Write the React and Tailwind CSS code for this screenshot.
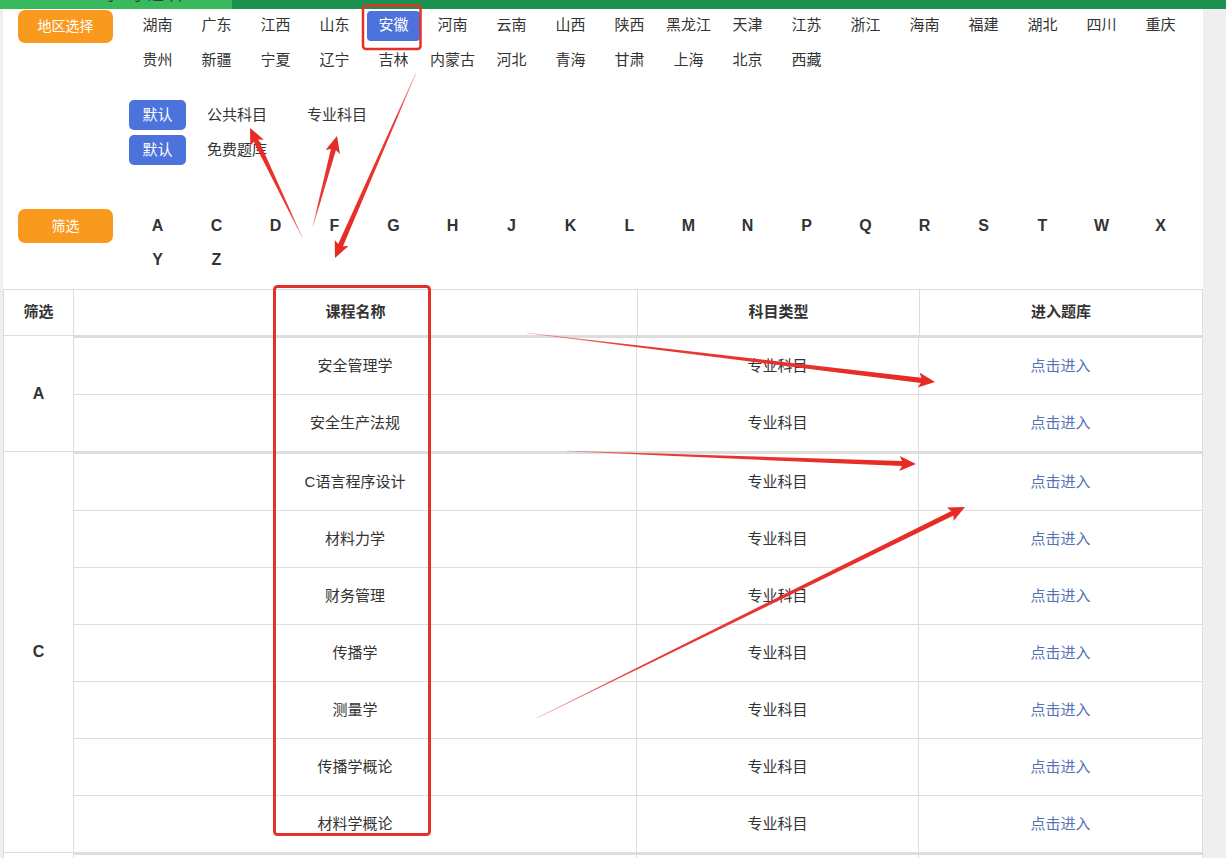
import React from "react";

const row1 = ["湖南","广东","江西","山东","安徽","河南","云南","山西","陕西","黑龙江","天津","江苏","浙江","海南","福建","湖北","四川","重庆"];
const row2 = ["贵州","新疆","宁夏","辽宁","吉林","内蒙古","河北","青海","甘肃","上海","北京","西藏"];
const letters = ["A","C","D","F","G","H","J","K","L","M","N","P","Q","R","S","T","W","X","Y","Z"];

const groups = [
  { letter: "A", items: ["安全管理学", "安全生产法规"] },
  { letter: "C", items: ["C语言程序设计", "材料力学", "财务管理", "传播学", "测量学", "传播学概论", "材料学概论"] },
];

function arrowPoints(tx, ty, hx, hy, headLen = 14, headW = 7.5, shaftW = 2.6, tailW = 0.3) {
  const dx = hx - tx, dy = hy - ty;
  const len = Math.hypot(dx, dy);
  const ux = dx / len, uy = dy / len;
  const nx = -uy, ny = ux;
  const bx = hx - ux * headLen, by = hy - uy * headLen;
  const bbx = bx - ux * 2.5, bby = by - uy * 2.5;
  const p = [
    [tx + nx * tailW, ty + ny * tailW],
    [bx + nx * shaftW, by + ny * shaftW],
    [bbx + nx * headW, bby + ny * headW],
    [hx, hy],
    [bbx - nx * headW, bby - ny * headW],
    [bx - nx * shaftW, by - ny * shaftW],
    [tx - nx * tailW, ty - ny * tailW],
  ];
  return p.map((q) => q[0].toFixed(1) + "," + q[1].toFixed(1)).join(" ");
}

const arrows = [
  [302, 237, 250, 128],
  [313, 226, 337, 136],
  [416, 73, 335, 258],
  [527, 333, 935, 382],
  [567, 451, 916, 464],
  [537, 718, 965, 507],
];

function Annotations() {
  return (
    <svg className="absolute left-0 top-0 pointer-events-none" width="1226" height="858" viewBox="0 0 1226 858">
      <defs>
        {arrows.map((a, i) => (
          <linearGradient key={i} id={"ag" + i} gradientUnits="userSpaceOnUse" x1={a[0]} y1={a[1]} x2={a[2]} y2={a[3]}>
            <stop offset="0" stopColor="#e8302a" stopOpacity="0.45" />
            <stop offset="0.25" stopColor="#e8302a" stopOpacity="0.95" />
            <stop offset="1" stopColor="#e62a24" stopOpacity="1" />
          </linearGradient>
        ))}
      </defs>
      <rect x="363" y="5.5" width="57.5" height="43.5" rx="3" fill="none" stroke="#e2302a" strokeWidth="2.5" />
      <rect x="274.5" y="286.5" width="155" height="548" rx="3" fill="none" stroke="#e2302a" strokeWidth="3" />
      {arrows.map((a, i) => (
        <polygon key={i} points={arrowPoints(a[0], a[1], a[2], a[3])} fill={"url(#ag" + i + ")"} />
      ))}
    </svg>
  );
}

export default function App() {
  return (
    <div className="relative w-[1226px] h-[858px] overflow-hidden bg-[#efefef] flex flex-col font-['Liberation_Sans','Noto_Sans_CJK_SC',sans-serif] text-[#333]">
      {/* green top bar */}
      <div className="flex h-[9px] shrink-0">
        <div className="w-[232px] bg-[#38b95e] overflow-hidden pl-[104px]">
          <div className="-mt-[13px] text-[16px] leading-[16px] text-[#2f3b33] tracking-[6px]">学习题库</div>
        </div>
        <div className="flex-1 bg-[#1b914f]" />
      </div>

      {/* white panel */}
      <div className="ml-[3px] w-[1200px] flex-1 bg-white flex flex-col">
        {/* region selection */}
        <div className="flex">
          <div className="ml-[15px] mt-[1px] w-[95px] h-[33px] rounded-[7px] bg-[#f99a1e] text-white text-[14px] flex items-center justify-center shrink-0">
            地区选择
          </div>
          <div className="ml-[15px] -mt-[1px] grid grid-cols-[repeat(18,59px)] auto-rows-[35px] text-[15px]">
            {row1.map((p) => (
              <div key={p} className="flex items-center justify-center">
                {p === "安徽" ? (
                  <span className="w-[53px] h-[30px] rounded-[4px] bg-[#4c72dc] text-white flex items-center justify-center">{p}</span>
                ) : (
                  <span>{p}</span>
                )}
              </div>
            ))}
            {row2.map((p) => (
              <div key={p} className="flex items-center justify-center">
                <span>{p}</span>
              </div>
            ))}
          </div>
        </div>

        {/* default / subject type */}
        <div className="ml-[126px] mt-[22px] flex flex-col gap-[5px] text-[15px]">
          <div className="flex items-center h-[30px]">
            <span className="w-[57px] h-[30px] rounded-[5px] bg-[#4c72dc] text-white flex items-center justify-center">默认</span>
            <span className="ml-[21px]">公共科目</span>
            <span className="ml-[40px]">专业科目</span>
          </div>
          <div className="flex items-center h-[30px]">
            <span className="w-[57px] h-[30px] rounded-[5px] bg-[#4c72dc] text-white flex items-center justify-center">默认</span>
            <span className="ml-[21px]">免费题库</span>
          </div>
        </div>

        {/* letter filter */}
        <div className="flex mt-[44px]">
          <div className="ml-[15px] w-[95px] h-[34px] rounded-[7px] bg-[#f99a1e] text-white text-[14px] flex items-center justify-center shrink-0">
            筛选
          </div>
          <div className="ml-[15px] grid grid-cols-[repeat(18,59px)] auto-rows-[34px] text-[16px] font-bold">
            {letters.map((l) => (
              <div key={l} className="flex items-center justify-center">{l}</div>
            ))}
          </div>
        </div>

        {/* table */}
        <div className="mt-[12px] border-l border-r border-t border-[#dddddd] text-[15px]">
          <div className="flex h-[45px] font-bold">
            <div className="w-[70px] border-r border-[#dddddd] flex items-center justify-center">筛选</div>
            <div className="w-[564px] border-r border-[#dddddd] flex items-center justify-center">课程名称</div>
            <div className="w-[282px] border-r border-[#dddddd] flex items-center justify-center">科目类型</div>
            <div className="flex-1 flex items-center justify-center">进入题库</div>
          </div>
          {groups.map((g) => (
            <div key={g.letter} className="flex">
              <div className="w-[70px] shrink-0 border-t border-r border-[#dddddd] flex items-center justify-center text-[16px] font-bold">
                {g.letter}
              </div>
              <div className="flex-1 border-t-[3px] border-[#dddddd] flex flex-col">
                {g.items.map((name, i) => (
                  <div key={name} className={"flex " + (i === 0 ? "h-[56px]" : "h-[57px] border-t border-[#dddddd]")}>
                    <div className="w-[563px] border-r border-[#dddddd] flex items-center justify-center">{name}</div>
                    <div className="w-[282px] border-r border-[#dddddd] flex items-center justify-center">专业科目</div>
                    <div className="flex-1 flex items-center justify-center text-[#5472b5]">点击进入</div>
                  </div>
                ))}
              </div>
            </div>
          ))}
          {/* start of next group (cut off by the window) */}
          <div className="flex h-[40px]">
            <div className="w-[70px] shrink-0 border-t border-r border-[#dddddd]" />
            <div className="flex-1 border-t-[3px] border-[#dddddd] flex">
              <div className="w-[563px] border-r border-[#dddddd]" />
              <div className="w-[282px] border-r border-[#dddddd]" />
              <div className="flex-1" />
            </div>
          </div>
        </div>
      </div>

      <Annotations />
    </div>
  );
}
